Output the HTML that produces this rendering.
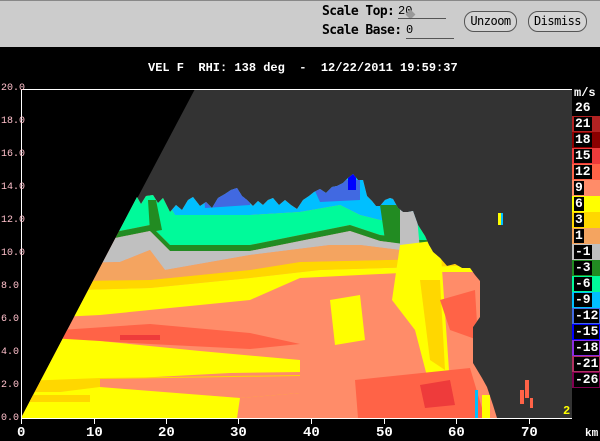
<!DOCTYPE html>
<html><head><meta charset="utf-8"><style>
*{margin:0;padding:0;box-sizing:border-box}
body{width:600px;height:440px;background:#000;position:relative;overflow:hidden;font-family:"Liberation Mono","DejaVu Sans Mono",monospace}
.bar{position:absolute;left:0;top:0;width:600px;height:47px;background:#cccccc;border-top:1px solid #888}
.lbl{position:absolute;font-weight:bold;font-size:13px;color:#000;font-family:"DejaVu Sans Mono",monospace;letter-spacing:-0.6px}
.btn{position:absolute;top:10px;height:21px;border:1px solid #555;border-radius:10px;font-size:12px;line-height:19px;text-align:center;background:#d4d4d4;font-family:"DejaVu Sans Mono",monospace;letter-spacing:-0.5px}
.t{position:absolute;color:#fff;font-weight:bold;font-size:12px;white-space:pre}
.yl{position:absolute;color:#ffc0cb;font-size:10px;left:1px}
.xl{position:absolute;color:#fff;font-weight:bold;font-size:14px;top:425px}
.lg{position:absolute;left:572px;width:28px;height:16px}
.lg span{position:absolute;left:2px;top:1px;background:#000;color:#fff;font-weight:bold;font-size:13px;line-height:14px;padding:0 1px}
</style></head><body>
<div class="bar">
<div class="lbl" style="left:322px;top:3px">Scale Top:</div>
<div class="lbl" style="left:322px;top:22px">Scale Base:</div>
<div style="position:absolute;left:398px;top:3px;font-size:12px">20</div>
<div style="position:absolute;left:407px;top:10px;width:7px;height:7px;background:#999;transform:rotate(45deg)"></div>
<div style="position:absolute;left:398px;top:17px;width:48px;height:1px;background:#555"></div>
<div style="position:absolute;left:406px;top:22px;font-size:12px">0</div>
<div style="position:absolute;left:406px;top:37px;width:48px;height:1px;background:#555"></div>
<div class="btn" style="left:464px;width:53px">Unzoom</div>
<div class="btn" style="left:528px;width:59px">Dismiss</div>
</div>
<div class="t" style="left:148px;top:61px">VEL F  RHI: 138 deg  -  12/22/2011 19:59:37</div>
<svg width="600" height="440" style="position:absolute;left:0;top:0">
<defs><clipPath id="c"><polygon points="21,418 137,197 141,204 146,196 153,195 158,203 163,198 170,212 176,205 182,210 188,200 193,197 200,206 206,202 212,208 218,198 225,194 231,190 237,188 242,196 247,200 253,206 258,201 263,205 268,200 273,198 279,205 285,200 291,205 297,209 303,200 309,196 314,192 320,189 326,193 332,187 337,186 343,183 348,178 353,174 358,180 363,180 367,196 372,201 376,206 380,206 385,200 390,198 393,199 398,208 403,212 408,212 413,211 418,225 425,236 429,245 433,252 440,258 447,266 455,264 462,268 470,268 475,275 480,281 480,317 473,327 473,363 482,378 487,387 493,405 497,418"/></clipPath></defs>
<rect x="21" y="89" width="551" height="329" fill="#333"/>
<polygon points="21,89 195,89 21,418" fill="#000"/>
<g clip-path="url(#c)">
<rect x="0" y="150" width="520" height="280" fill="#ff8c69"/>
<polygon points="0,150 520,150 520,225 400,225 360,215 340,205 300,212 250,215 175,215 160,190 0,190" fill="#00bfff"/>
<polygon points="200,150 250,150 250,205 205,208" fill="#4169e1"/>
<polygon points="230,180 255,180 262,200 240,205" fill="#4169e1"/>
<polygon points="310,180 360,180 360,200 320,202" fill="#4169e1"/>
<polygon points="348,170 356,170 356,190 348,190" fill="#0000ff"/>
<polygon points="0,190 160,190 175,215 250,215 300,212 340,205 360,215 400,225 520,225 520,240 420,240 380,235 350,225 300,235 250,245 170,245 150,225 100,235 0,235" fill="#00fa9a"/>
<polygon points="0,235 100,235 150,225 170,245 250,245 300,235 350,225 380,235 420,240 520,240 520,247 420,246 380,241 350,231 300,241 250,251 170,251 150,231 100,241 0,241" fill="#228b22"/>
<polygon points="148,200 156,200 162,230 150,232" fill="#228b22"/>
<polygon points="380,205 400,205 400,245 385,240" fill="#228b22"/>
<polygon points="0,241 100,241 150,231 170,251 250,251 300,241 350,231 380,241 420,246 520,247 520,255 400,250 360,245 330,245 250,255 165,270 150,250 120,262 0,265" fill="#c0c0c0"/>
<polygon points="400,195 415,195 420,250 400,250" fill="#c0c0c0"/>
<polygon points="0,265 120,262 150,250 165,270 250,255 330,245 360,245 400,250 520,255 520,257 300,262 250,270 150,280 0,282" fill="#f4a460"/>
<polygon points="0,282 150,280 250,270 300,262 520,257 520,264 320,270 250,278 150,288 0,292" fill="#ffd700"/>
<polygon points="0,292 150,288 250,278 320,270 520,264 520,272 420,272 300,278 250,300 200,305 100,315 0,320" fill="#ff0"/>
<polygon points="400,245 440,240 450,385 428,380 415,330 392,300" fill="#ff0"/>
<polygon points="420,280 440,280 445,370 430,360" fill="#ffd700"/>
<polygon points="330,300 360,295 365,340 335,345" fill="#ff0"/>
<polygon points="60,330 150,324 250,333 300,344 250,349 150,344 60,339" fill="#ff6347"/>
<polygon points="120,335 160,335 160,340 120,340" fill="#ee3b3b"/>
<polygon points="0,335 100,341 200,351 300,360 300,372 230,373 100,380 0,382" fill="#ff0"/>
<polygon points="0,382 100,378 300,375 300,393 240,398 100,388 60,392 0,392" fill="#ffd700"/>
<polygon points="100,379 300,376 300,393 240,398 100,388" fill="#ff8c69"/>
<polygon points="0,392 60,392 100,387 240,398 237,418 0,418" fill="#ff0"/>
<polygon points="30,395 90,395 90,402 30,402" fill="#ffd700"/>
<polygon points="355,380 470,368 485,418 358,418" fill="#ff6347"/>
<polygon points="420,385 450,380 455,405 425,408" fill="#ee3b3b"/>
<polygon points="440,300 475,290 478,340 450,330" fill="#ff6347"/>
<rect x="475" y="390" width="3" height="28" fill="#00bfff"/>
<rect x="482" y="395" width="8" height="23" fill="#ff0"/>
</g>
<rect x="498" y="213" width="3" height="12" fill="#ff0"/><rect x="501" y="213" width="2" height="12" fill="#00bfff"/>
<rect x="520" y="390" width="4" height="14" fill="#ff6347"/><rect x="525" y="380" width="4" height="18" fill="#ff6347"/><rect x="530" y="398" width="3" height="10" fill="#ff6347"/>
<g stroke="#fff" stroke-width="1" fill="none">
<line x1="21.5" y1="89" x2="21.5" y2="419"/><line x1="21" y1="89.5" x2="572" y2="89.5"/><line x1="21" y1="418.5" x2="572" y2="418.5"/>
<line x1="21.5" y1="418" x2="21.5" y2="424"/><line x1="94.5" y1="418" x2="94.5" y2="424"/><line x1="166.5" y1="418" x2="166.5" y2="424"/><line x1="238.5" y1="418" x2="238.5" y2="424"/><line x1="311.5" y1="418" x2="311.5" y2="424"/><line x1="384.5" y1="418" x2="384.5" y2="424"/><line x1="456.5" y1="418" x2="456.5" y2="424"/><line x1="529.5" y1="418" x2="529.5" y2="424"/>
</g>
</svg>
<div class="yl" style="top:83px">20.0</div><div class="yl" style="top:116px">18.0</div><div class="yl" style="top:149px">16.0</div><div class="yl" style="top:182px">14.0</div><div class="yl" style="top:215px">12.0</div><div class="yl" style="top:248px">10.0</div><div class="yl" style="top:281px">8.0</div><div class="yl" style="top:314px">6.0</div><div class="yl" style="top:347px">4.0</div><div class="yl" style="top:380px">2.0</div><div class="yl" style="top:413px">0.0</div>
<div class="xl" style="left:17px">0</div><div class="xl" style="left:86px">10</div><div class="xl" style="left:158px">20</div><div class="xl" style="left:230px">30</div><div class="xl" style="left:303px">40</div><div class="xl" style="left:376px">50</div><div class="xl" style="left:448px">60</div><div class="xl" style="left:521px">70</div><div class="xl" style="left:585px;font-size:11px;top:428px">km</div>
<div class="t" style="left:574px;top:86px">m/s</div>
<div class="lg" style="top:100px;background:#000"><span>26</span></div>
<div class="lg" style="top:116px;background:#b22222"><span>21</span></div>
<div class="lg" style="top:132px;background:#8b0000"><span>18</span></div>
<div class="lg" style="top:148px;background:#ee3b3b"><span>15</span></div>
<div class="lg" style="top:164px;background:#ff6347"><span>12</span></div>
<div class="lg" style="top:180px;background:#ff8c69"><span>9</span></div>
<div class="lg" style="top:196px;background:#ffff00"><span>6</span></div>
<div class="lg" style="top:212px;background:#ffd700"><span>3</span></div>
<div class="lg" style="top:228px;background:#f4a460"><span>1</span></div>
<div class="lg" style="top:244px;background:#c0c0c0"><span>-1</span></div>
<div class="lg" style="top:260px;background:#228b22"><span>-3</span></div>
<div class="lg" style="top:276px;background:#00fa9a"><span>-6</span></div>
<div class="lg" style="top:292px;background:#00bfff"><span>-9</span></div>
<div class="lg" style="top:308px;background:#4169e1"><span>-12</span></div>
<div class="lg" style="top:324px;background:#0000ff"><span>-15</span></div>
<div class="lg" style="top:340px;background:#8a2be2"><span>-18</span></div>
<div class="lg" style="top:356px;background:#b03060"><span>-21</span></div>
<div class="lg" style="top:372px;background:#800050"><span>-26</span></div>
<div class="t" style="left:563px;top:404px;color:#ff0">2</div>
</body></html>
